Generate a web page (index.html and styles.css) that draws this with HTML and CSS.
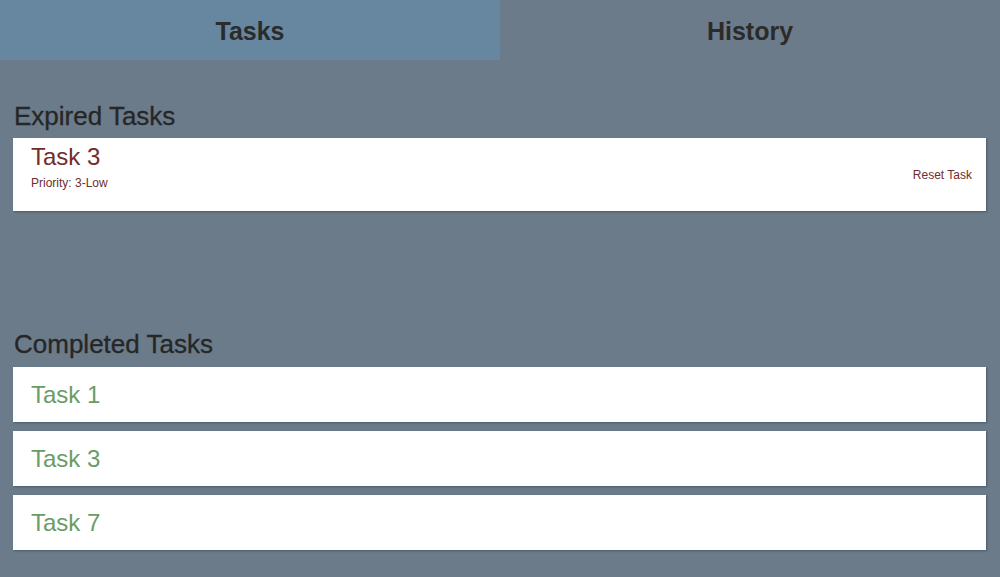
FILE: index.html
```html
<!DOCTYPE html>
<html>
<head>
<meta charset="utf-8">
<link rel="stylesheet" href="styles.css">
</head>
<body>
<nav class="tabs">
  <div class="tab active">Tasks</div>
  <div class="tab">History</div>
</nav>
<main class="content">
  <section class="section expired">
    <h2 class="heading">Expired Tasks</h2>
    <div class="card card-expired">
      <div class="info">
        <div class="title red">Task 3</div>
        <div class="priority">Priority: 3-Low</div>
      </div>
      <div class="reset">Reset Task</div>
    </div>
  </section>
  <section class="section completed">
    <h2 class="heading">Completed Tasks</h2>
    <div class="list">
      <div class="card card-done"><div class="title green">Task 1</div></div>
      <div class="card card-done"><div class="title green">Task 3</div></div>
      <div class="card card-done"><div class="title green">Task 7</div></div>
    </div>
  </section>
</main>
</body>
</html>
```
FILE: styles.css
```css
html, body {
  margin: 0;
  padding: 0;
  height: 100%;
}
body {
  background: #6b7b89;
  font-family: "Liberation Sans", Arial, sans-serif;
  color: #2b2b2b;
}
.tabs {
  display: flex;
  height: 60px;
}
.tab {
  flex: 1;
  display: flex;
  align-items: center;
  justify-content: center;
  padding-top: 2px;
  font-weight: bold;
  font-size: 25px;
  color: #2b2b2b;
}
.tab.active {
  background: #67869f;
}
.content {
  padding: 41px 14px 0 13px;
}
.heading {
  margin: 0 0 7px 1px;
  font-size: 26px;
  line-height: 30px;
  font-weight: normal;
  color: #262626;
  -webkit-text-stroke: 0.3px #262626;
}
.expired {
  margin-bottom: 118px;
}
.completed .heading {
  margin-bottom: 8px;
}
.card {
  background: #ffffff;
  box-shadow: 1px 1px 2px rgba(40, 50, 60, 0.45);
}
.card-expired {
  display: flex;
  align-items: center;
  justify-content: space-between;
  padding: 5px 14px 0 18px;
  height: 68px;
}
.info {
  align-self: flex-start;
}
.title {
  font-size: 24px;
  line-height: 28px;
}
.red { color: #722c2c; }
.green { color: #6a9c68; }
.priority {
  font-size: 12px;
  line-height: 16px;
  margin-top: 4px;
  color: #722c2c;
}
.reset {
  font-size: 12px;
  color: #722c2c;
  margin-bottom: 5px;
}
.list {
  display: flex;
  flex-direction: column;
  gap: 9px;
}
.card-done {
  height: 55px;
  display: flex;
  align-items: center;
  padding-left: 18px;
}
```
